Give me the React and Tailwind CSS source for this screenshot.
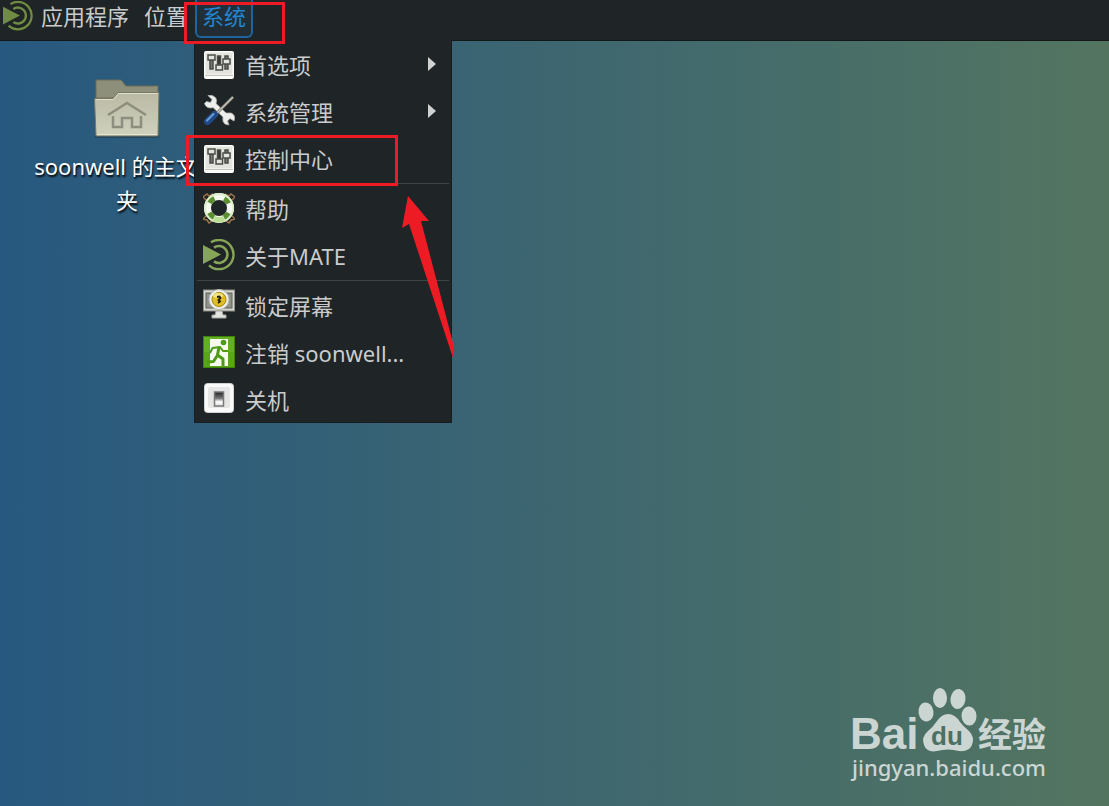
import React from "react";

const MateLogo = ({ className, color = "#87a556" }) => (
  <svg viewBox="0 0 32 32" className={className} fill="none" aria-hidden="true">
    <path d="M8 3.3A14.6 14.6 0 1 1 6 26.3" stroke={color} strokeWidth="2.4" />
    <path d="M11 8.6A8.5 8.5 0 1 1 11 22.4" stroke={color} strokeWidth="2.6" />
    <path d="M0 6L18 15.5L0 25Z" fill={color} />
  </svg>
);

const SlidersIcon = () => (
  <svg viewBox="0 0 32 32" className="size-8" aria-hidden="true">
    <rect x="1" y="3" width="30" height="28" rx="2" fill="#fbfbf9" />
    <rect x="2.5" y="4.5" width="27" height="22" fill="#e4e4df" />
    <path d="M2 27.5h28" stroke="#c4c4bf" />
    <g stroke="#4a4c48" strokeWidth="1.5" fill="#e4e4df">
      <path d="M7 12h3v9h-3z" fill="#777" />
      <path d="M5 7h7v5H5z" />
      <path d="M14.5 8h3v9h-3z" fill="#333" />
      <path d="M13 17h6.5v5H13z" />
      <path d="M22 8h3v13h-3z" fill="#777" />
      <path d="M20 11h7v5h-7z" />
    </g>
  </svg>
);

const ToolsIcon = () => (
  <svg viewBox="0 0 32 32" className="size-8" aria-hidden="true">
    <path
      d="M5 .5L9 4.500L7.500 7.500L3.500 6.500L1.500 8.500Q3 13 8 13L10 12.500L20 22Q19 27 22 29L26 30L24.500 26L27 23.500L31 26Q33 20 28 18L23 18L13 8.500Q15 2.500 9 .5Z"
      fill="#eeeeec"
      stroke="#b5b6b2"
      strokeWidth=".8"
    />
    <path d="M30 2L12 20" stroke="#77766d" strokeWidth="3" />
    <path d="M30 2L12 20" stroke="#c9c8bd" strokeWidth="1.2" />
    <path
      d="M11.500 19.500L4.500 26.500"
      stroke="#204a87"
      strokeWidth="7"
      strokeLinecap="round"
    />
    <path
      d="M10.500 19L4 25.500"
      stroke="#6d9fdc"
      strokeWidth="1.8"
      strokeLinecap="round"
    />
  </svg>
);

const HelpIcon = () => (
  <svg viewBox="0 0 32 32" className="size-8" fill="none" aria-hidden="true">
    <path
      d="M4 9L0 5L4 2L6 4L10 2M28 9L32 5L28 2L26 4L22 2M4 23L0 27L4 28L6 31L9 29M28 23L32 27L28 28L26 31L23 29"
      stroke="#9b744c"
      strokeWidth="1.5"
    />
    <circle cx="16" cy="16" r="11.5" stroke="#f4f8ef" strokeWidth="7" />
    <circle
      cx="16"
      cy="16"
      r="11.5"
      stroke="#5c8e32"
      strokeWidth="7"
      strokeDasharray="7 11.064"
      strokeDashoffset="-5.5"
    />
    <circle cx="16" cy="16" r="14" stroke="#ddeecb" strokeWidth="2" />
    <path d="M10 29Q16 32 22 29L20 24Q16 26 12 24Z" fill="#b9dd93" />
  </svg>
);

const LockIcon = () => (
  <svg viewBox="0 0 32 32" className="size-8" aria-hidden="true">
    <rect x=".5" y="1" width="31" height="21" fill="#d6d6d0" stroke="#8b8b85" />
    <rect x="3" y="4" width="26" height="15" fill="#8e938b" stroke="#5b5f59" />
    <path d="M13 22h6l1 4h3v3H9v-3h3z" fill="#e3e3df" stroke="#a5a5a0" />
    <circle cx="16" cy="10.5" r="10" fill="#eeeeec" stroke="#b8b8b2" />
    <circle cx="16" cy="10.5" r="7" fill="#dfbd29" stroke="#a88809" />
    <ellipse cx="15" cy="6.5" rx="5" ry="2.5" fill="#f3e47b" />
    <path
      d="M14 8L16.500 7.500L17.500 9L15.500 11L17 12.500L15 14"
      fill="none"
      stroke="#211d08"
      strokeWidth="1.8"
    />
  </svg>
);

const LogoutIcon = () => (
  <svg viewBox="0 0 32 32" className="size-8" fill="none" aria-hidden="true">
    <rect x=".5" y=".5" width="31" height="31" fill="#5aa51a" stroke="#3f8208" />
    <path d="M1 1h30v15H1z" fill="#6bb52c" opacity=".6" />
    <path d="M7 3h18v27H7z" fill="#f6faf1" />
    <circle cx="20.5" cy="6.5" r="2.8" fill="#4e9a12" />
    <path
      d="M16 11L14.500 19L20 23L20 30M14 20L10.500 25.500L4 26"
      stroke="#4e9a12"
      strokeWidth="3"
      strokeLinejoin="round"
    />
    <path
      d="M7 17L9.500 12L17 11L20 15L25 15"
      stroke="#4e9a12"
      strokeWidth="2"
      strokeLinejoin="round"
    />
  </svg>
);

const ShutdownIcon = () => (
  <svg viewBox="0 0 32 32" className="size-8" aria-hidden="true">
    <defs>
      <linearGradient id="switch" x2="0" y2="1">
        <stop stopColor="#222" />
        <stop offset=".45" stopColor="#777" />
        <stop offset=".7" stopColor="#fff" />
        <stop offset="1" stopColor="#ddd" />
      </linearGradient>
    </defs>
    <rect x="1.5" y=".5" width="29" height="29" rx="3" fill="#fafafa" stroke="#d3d3d0" />
    <rect x="5" y="4" width="22" height="21" rx="2" fill="#e6e6e5" />
    <rect x="11.5" y="9" width="9" height="14" fill="url(#switch)" stroke="#77787a" strokeWidth="1.5" />
  </svg>
);

const FolderIcon = () => (
  <svg viewBox="0 0 68 62" className="h-[62px] w-[68px]" aria-hidden="true">
    <defs>
      <linearGradient id="folder" x2="0" y2="1">
        <stop stopColor="#b9b9a4" />
        <stop offset="1" stopColor="#d0d1bd" />
      </linearGradient>
    </defs>
    <path d="M2 58h64v3H2z" fill="#19334a" opacity=".5" />
    <path d="M3 3h25l5 6h32v12H3z" fill="#8e8f7a" stroke="#6c6d5b" />
    <path
      d="M1.500 21.500H20l5-6H66L65 59H3z"
      fill="url(#folder)"
      stroke="#77785f"
    />
    <path d="M3 22.500H20.500l5-6H65" fill="none" stroke="#dedecf" />
    <path d="M4 57.500h60" stroke="#e4e4d8" />
    <path
      d="M15 38L34 26L53 38M20 39v11h9v-9h10v9h9V39"
      fill="none"
      stroke="#8d8e7d"
      strokeWidth="2.5"
    />
  </svg>
);

const menuGroups = [
  [
    { label: "首选项", icon: SlidersIcon, submenu: true },
    { label: "系统管理", icon: ToolsIcon, submenu: true },
    { label: "控制中心", icon: SlidersIcon },
  ],
  [
    { label: "帮助", icon: HelpIcon },
    { label: "关于MATE", icon: MateLogo },
  ],
  [
    { label: "锁定屏幕", icon: LockIcon },
    { label: "注销 soonwell...", icon: LogoutIcon },
    { label: "关机", icon: ShutdownIcon },
  ],
];

const SystemMenu = () => (
  <div
    role="menu"
    className="absolute left-0 top-full z-10 w-[258px] border border-t-0 border-[#191d1f] bg-[#1f2426]"
  >
    {menuGroups.map((group, i) => (
      <div key={i} role="group">
        {i > 0 && (
          <div className="mx-[2px] h-[3px] pt-[2px]">
            <div className="h-px bg-[#414345]" />
          </div>
        )}
        {group.map(({ label, icon: Icon, submenu }) => (
          <button
            key={label}
            role="menuitem"
            className="flex h-[47px] w-full items-center gap-[10px] pl-2 pr-[14px] text-left text-[22px] leading-8"
          >
            <Icon className="size-8" />
            <span className="flex-1 pt-[2px] whitespace-nowrap">{label}</span>
            {submenu && (
              <svg viewBox="0 0 10 16" className="h-4 w-[10px]" aria-hidden="true">
                <path d="M1 1L9 8L1 15Z" fill="#d0d2d2" />
              </svg>
            )}
          </button>
        ))}
      </div>
    ))}
  </div>
);

const MenuBar = () => (
  <header className="relative z-10 flex h-[41px] items-start border-b border-[#141718] bg-[#1f2426] text-[22px] leading-8 [text-shadow:1px_2px_1px_#000]">
    <button className="flex items-center gap-2 pl-[3px]">
      <MateLogo className="size-[30px]" color="#6f8c40" />
      <span>应用程序</span>
    </button>
    <button className="ml-[15px]">位置</button>
    <div className="relative ml-[6px] h-10">
      <button className="ml-px h-[38px] rounded-b-md border-2 border-t-0 border-[#1d659c] bg-linear-to-b from-[#20323e] to-[#222b30] px-[5px] pb-1 text-[#2384cf]">
        系统
      </button>
      <SystemMenu />
    </div>
  </header>
);

const BaiduLogo = () => (
  <svg
    viewBox="-4 0 208 100"
    className="h-[100px] w-[208px] fill-[#cbd6d3]"
    role="img"
    aria-label="Baidu 经验"
  >
    <text x="-1" y="61" className="font-['Liberation_Sans',sans-serif] text-[44px] font-bold">
      Bai
    </text>
    <ellipse cx="75" cy="24" rx="7.5" ry="9.5" transform="rotate(-8 75 24)" />
    <ellipse cx="89" cy="10" rx="7" ry="10" />
    <ellipse cx="107" cy="11" rx="7.5" ry="10" transform="rotate(8 107 11)" />
    <ellipse cx="118" cy="28" rx="7.5" ry="9.5" transform="rotate(-5 118 28)" />
    <path d="M97 26Q104 26 109 34Q112 38 118 43Q124 49 121 57Q118 64 108 63Q97 60 86 63Q76 65 73 57Q70 49 77 43Q82 39 86 33Q91 26 97 26Z" />
    <text x="80" y="57" className="fill-[#4b7066] font-['Liberation_Sans',sans-serif] text-[26px] font-bold">
      du
    </text>
    <text x="127" y="59" className="font-['Noto_Sans_CJK_SC',sans-serif] text-[34px] font-bold">
      经验
    </text>
    <text x="1" y="88" className="font-['Noto_Sans',sans-serif] text-[22px] font-medium">
      jingyan.baidu.com
    </text>
  </svg>
);

// Red boxes and arrow that point out the clicks to make
const Annotations = () => (
  <div className="pointer-events-none absolute inset-0 z-20">
    <div className="absolute left-[184px] top-[2px] h-[42px] w-[101px] border-3 border-[#ed1c24]" />
    <div className="absolute left-[186px] top-[135px] h-[51px] w-[212px] border-3 border-[#ed1c24]" />
    <svg viewBox="0 0 54 164" className="absolute left-[401px] top-[195px] h-[164px] w-[54px]">
      <path d="M7 1L28 26L20 26L52 148L52 163L8 29L1 33Z" fill="#ed1c24" />
    </svg>
  </div>
);

export default function App() {
  return (
    <div className="relative flex min-h-screen flex-col overflow-hidden bg-linear-to-r from-[#27587f] via-[#3d6670] to-[#537560] font-['Noto_Sans','Noto_Sans_CJK_SC',sans-serif] text-[#c9cbcc]">
      <MenuBar />
      <main className="flex flex-1 flex-col justify-between">
        <a
          href="#home"
          className="ml-7 mt-9 flex w-[198px] flex-col items-center text-center text-[22px] leading-[34px] text-white [text-shadow:1px_2px_2px_#000]"
        >
          <FolderIcon />
          <span className="mt-[10px]">
            soonwell 的主文件
            <br />夹
          </span>
        </a>
        <div className="flex justify-end pr-[54px] pb-[18px]">
          <BaiduLogo />
        </div>
      </main>
      <Annotations />
    </div>
  );
}
